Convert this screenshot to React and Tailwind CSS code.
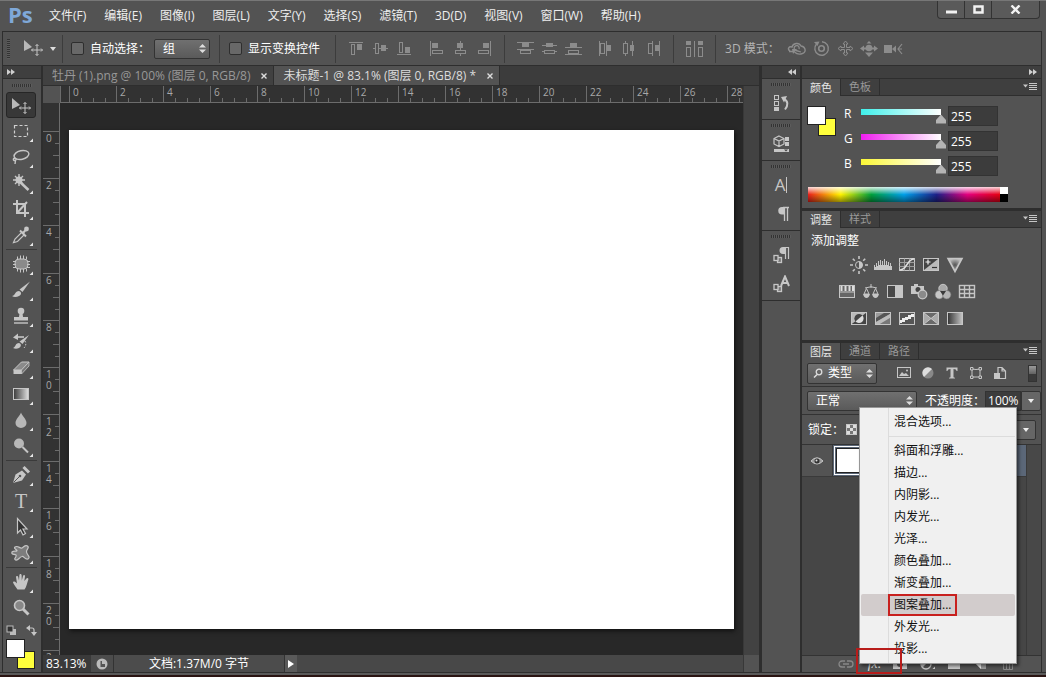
import React from "react";

const MENUS = ["文件(F)", "编辑(E)", "图像(I)", "图层(L)", "文字(Y)", "选择(S)", "滤镜(T)", "3D(D)", "视图(V)", "窗口(W)", "帮助(H)"];
const FX_ITEMS = ["斜面和浮雕...", "描边...", "内阴影...", "内发光...", "光泽...", "颜色叠加...", "渐变叠加...", "图案叠加...", "外发光...", "投影..."];
const H_TICKS = [0, 2, 4, 6, 8, 10, 12, 14, 16, 18, 20, 22, 24, 26, 28];
const V_TICKS = [0, 2, 4, 6, 8, 10, 12, 14, 16, 18, 20, 22];

const C = "#c6c6c6";

function Icon({ w = 16, h = 16, label, children, className = "" }) {
  return (
    <svg width={w} height={h} viewBox={`0 0 ${w} ${h}`} fill="none" aria-label={label} aria-hidden={label ? undefined : true} className={`shrink-0 ${className}`}>
      {children}
    </svg>
  );
}

function MoveGlyph() {
  return (
    <>
      <path d="M0 0 L8 7 L0 11 Z" fill="#b8b8b8" />
      <path d="M13 4.500 V15.500 M7.500 10 H18.500" stroke={C} />
      <path d="M11.500 6 L13 4.500 L14.500 6 M11.500 14 L13 15.500 L14.500 14 M9 8.500 L7.500 10 L9 11.500 M17 8.500 L18.500 10 L17 11.500" stroke={C} />
    </>
  );
}

/* ---------- tool box (each glyph is drawn on a 30 x 26 field) ---------- */
const TOOLS = [
  [
    { n: "移动工具", on: true, g: <g transform="translate(6 6)"><MoveGlyph /></g> },
    { n: "矩形选框工具", g: <rect x="8.500" y="7.500" width="13" height="11" stroke="#d0d0d0" strokeWidth="1.2" strokeDasharray="3 2" /> },
    { n: "套索工具", g: <g stroke={C} strokeWidth="1.400"><ellipse cx="15.500" cy="11" rx="7.500" ry="4.300" transform="rotate(-12 15.500 11)" /><path d="M9.500 14 C6.500 14 7 17 9 16.500 C11 16 10 14 8.500 14.500 M9.500 16.500 L9 20" /></g> },
    { n: "魔棒工具", g: <g stroke={C}><path d="M13 11 L22.500 20" strokeWidth="2.500" /><path d="M13 4 V16 M7 10 H19 M9 6 L17 14 M17 6 L9 14" strokeWidth="1.400" /><circle cx="13" cy="10" r="3.200" fill={C} /></g> },
    { n: "裁剪工具", g: <path d="M11 4 V17 H23 M7 8 H19 V21 M11 17 L21 6" stroke={C} strokeWidth="2" /> },
    { n: "吸管工具", g: <><path d="M7.500 20.500 L9 17 L16 10 L18.500 12.500 L11.500 19.500 Z" stroke={C} strokeWidth="1.200" /><path d="M14 8.500 L20 14.500 M17 11 L20.500 7" stroke={C} strokeWidth="2" /><circle cx="20.500" cy="7" r="2.400" fill={C} /></> },
  ],
  [
    { n: "修补工具", g: <><rect x="9" y="8" width="13" height="10" rx="4" fill="#8a8a8a" stroke={C} /><path d="M7 10.500 H10 M7 13.500 H10 M7 16.500 H10 M21 10.500 H24 M21 13.500 H24 M21 16.500 H24 M11.500 5.500 V8 M14.500 4.500 V8 M17.500 4.500 V8 M20.500 5.500 V8 M11.500 18 V20.500 M14.500 18 V21.500 M17.500 18 V21.500 M20.500 18 V20.500" stroke={C} /></> },
    { n: "画笔工具", g: <><path d="M24 4.500 L16.500 15 L13.500 12.500 Z" fill={C} /><path d="M6 19 C9 19 9 14 13 14 C16 15 15.500 18 13 19 C11 20 8 20.500 6 19 Z" fill={C} /></> },
    { n: "仿制图章工具", g: <><circle cx="15" cy="8" r="3.300" fill={C} /><path d="M13.500 10 H16.500 L17 14 H22 V17.500 H8 V14 H13 Z" fill={C} /><path d="M8 20 H22" stroke={C} strokeWidth="1.400" /></> },
    { n: "历史记录画笔工具", g: <><path d="M23 6 L16.500 15 L13.500 12.500 Z" fill={C} /><path d="M7 19 C10 18 9 14 13 14 C16 15 15 18 13 19 C11 20 9 20 7 19 Z" fill={C} /><path d="M9 8 H18" stroke={C} strokeWidth="1.600" /><path d="M7 8.500 L12 4.500 V11 Z" fill={C} /><path d="M19 12 C21 15 19 19 17 19.500" stroke={C} strokeDasharray="1.500 1.500" /></> },
    { n: "橡皮擦工具", g: <><path d="M7.500 15 L15.500 7 H23 L15.500 15 Z" fill="#8a8a8a" stroke={C} /><path d="M7.500 15 H15.500 V19 H7.500 Z" fill={C} /><path d="M15.500 15 L23 7 V11 L15.500 19 Z" fill="#777" stroke={C} strokeWidth=".8" /></> },
    { n: "渐变工具", g: <><defs><linearGradient id="tg"><stop stopColor="#3a3a3a" /><stop offset="1" stopColor="#e0e0e0" /></linearGradient></defs><rect x="7.500" y="7.500" width="15" height="11" fill="url(#tg)" stroke={C} /></> },
    { n: "模糊工具", g: <path d="M15 5.500 C16 9 20.500 12 20.500 16 A5.500 5 0 0 1 9.500 16 C9.500 12 14 9 15 5.500 Z" fill="#b8b8b8" /> },
    { n: "减淡工具", g: <><circle cx="13" cy="10.500" r="5" fill="#b8b8b8" /><path d="M16.500 14 L22 19.500" stroke={C} strokeWidth="2" /></> },
  ],
  [
    { n: "钢笔工具", g: <><path d="M7 21 L9.500 12.500 L16 8.500 L20 12.500 L16 18.500 Z" fill={C} /><path d="M7.500 20.500 L13.500 14.500" stroke="#535353" /><circle cx="14" cy="14" r="1.300" fill="#535353" /><path d="M17.500 5 L23 10.500" stroke={C} strokeWidth="3" /></> },
    { n: "横排文字工具", t: "T" },
    { n: "路径选择工具", g: <path d="M11.500 4.500 V19 L14.500 16 L17 21 L19.500 19.500 L17 15 H21 Z" fill="#333" stroke={C} strokeWidth="1.200" /> },
    { n: "自定形状工具", g: <path d="M9 7 C12 5 14 9 16 8 C18 7 19 4.500 21.500 6 C24 8 20 9.500 20.500 12 C21 15 25 17 22 19 C19 20 18 16 16 16.500 C13 17 12.500 21 9.500 20 C7 18.500 11.500 16.500 10 15 C8 14 5 14.500 6 12 C8 10 11 12 11 10.500 C10 9 7.500 8.500 9 7 Z" fill="#7d7d7d" stroke={C} strokeWidth="1.200" /> },
  ],
  [
    { n: "抓手工具", g: <path d="M11.500 20.500 C10 18 8 16 7 13.500 C7 12 9 12 10 13.500 L11 14.500 L10 8 C10 6.500 12 6.500 12.200 8 L13 11.500 L13.400 6 C13.500 4.500 15.500 4.500 15.600 6 L15.800 11.500 L17 7 C17.500 5.500 19.200 6 19 7.500 L18.300 12 L20.500 9.500 C21.500 8.500 23 9.500 22.200 11 C21 14 20.500 18 18.500 20.500 Z" fill={C} /> },
    { n: "缩放工具", flat: true, g: <><circle cx="13.500" cy="10.500" r="5" fill="#888" stroke={C} strokeWidth="1.600" /><path d="M17 14 L22.500 19.500" stroke={C} strokeWidth="3" /></> },
  ],
];

function ToolButton({ tool }) {
  return (
    <button type="button" title={tool.n} aria-label={tool.n} className={`relative block h-[26px] w-[30px] rounded-[3px] border ${tool.on ? "border-[#262626] bg-[#383838]" : "border-transparent"}`}>
      <svg viewBox="0 0 30 26" width="30" height="26" fill="none" className="absolute -top-px -left-px" aria-hidden="true">
        {tool.g}
        {!tool.on && !tool.flat && <path d="M27 20.500 V24 H23.500 Z" fill="#e6e6e6" />}
      </svg>
      {tool.t && <span className="block text-center font-['Liberation_Serif',serif] text-[20px] leading-6 text-[#c6c6c6]">{tool.t}</span>}
    </button>
  );
}

function Grip() {
  return <div className="mx-auto h-[3px] w-5 bg-[repeating-linear-gradient(90deg,#333_0_1px,#5c5c5c_1px_2px)]" />;
}

function Swatches({ className = "" }) {
  return (
    <div className={`grid h-[30px] w-[29px] shrink-0 grid-cols-[11px_8px_10px] grid-rows-[12px_7px_11px] ${className}`}>
      <button type="button" aria-label="背景色" className="col-span-2 col-start-2 row-span-2 row-start-2 border border-[#222] bg-[#ffff3c]" />
      <button type="button" aria-label="前景色" className="col-span-2 col-start-1 row-span-2 row-start-1 border border-[#222] bg-white" />
    </div>
  );
}

function Chevrons({ left }) {
  return (
    <Icon w={8} h={6}>
      {left ? <path d="M4 0 V6 L0 3 Z M8 0 V6 L4 3 Z" fill="#cfcfcf" /> : <path d="M0 0 V6 L4 3 Z M4 0 V6 L8 3 Z" fill="#cfcfcf" />}
    </Icon>
  );
}

function Toolbox() {
  return (
    <aside className="flex w-[41px] shrink-0 flex-col border-r-2 border-l border-[#2e2e2e] bg-[#535353]">
      <button type="button" aria-label="展开工具箱" className="flex h-[13px] shrink-0 items-center border-b border-[#2e2e2e] bg-[#3f3f3f] pl-1"><Chevrons /></button>
      <div className="flex h-[13px] shrink-0 items-center"><Grip /></div>
      <div className="flex flex-col pl-[3px]">
        {TOOLS.map((group, i) => (
          <div key={i}>
            {i > 0 && <div className="my-px mr-1 h-px bg-[#3a3a3a]" />}
            {group.map((t) => <ToolButton key={t.n} tool={t} />)}
          </div>
        ))}
      </div>
      <div className="flex h-[18px] shrink-0 items-center justify-between pr-1 pl-[3px]">
        <button type="button" aria-label="默认前景色和背景色">
          <Icon w={11} h={11}><rect x="4" y="4" width="6" height="6" fill="#bbb" /><rect x="1" y="1" width="6" height="6" fill="#333" stroke="#bbb" /></Icon>
        </button>
        <button type="button" aria-label="切换前景色和背景色">
          <Icon w={11} h={11}><path d="M3 3 H6 Q8 3 8 5 V8" stroke={C} strokeWidth="1.200" /><path d="M0 3 L4 0 V6 Z M5 7 H11 L8 11 Z" fill={C} /></Icon>
        </button>
      </div>
      <Swatches className="ml-[3px]" />
    </aside>
  );
}

/* ---------- menu bar and options bar ---------- */
function MenuBar() {
  return (
    <header className="flex h-[31px] shrink-0 items-center border-t border-[#777] bg-[#535353] pr-[6px]">
      <span className="mb-1 w-[49px] pl-2 text-[22px] leading-6 font-bold text-[#7fa8d8]">Ps</span>
      <nav className="flex flex-1 gap-[18px]">
        {MENUS.map((m) => <button type="button" key={m} className="whitespace-nowrap text-[#eee]">{m}</button>)}
      </nav>
      <div className="flex h-[18px] self-start overflow-hidden rounded-b-[4px] border border-t-0 border-[#333] bg-[#5a5a5a]">
        <button type="button" aria-label="最小化" className="flex w-[27px] items-center justify-center border-r border-[#333]"><Icon w={11} h={8}><path d="M0 6 H11" stroke="#f2f2f2" strokeWidth="3" /></Icon></button>
        <button type="button" aria-label="最大化" className="flex w-[27px] items-center justify-center border-r border-[#333]"><Icon w={11} h={9}><rect x="1.500" y="1.500" width="8" height="6" stroke="#f2f2f2" strokeWidth="2.500" /></Icon></button>
        <button type="button" aria-label="关闭" className="flex w-[47px] items-center justify-center"><Icon w={11} h={9}><path d="M1.500 0.500 L9.500 8.500 M9.500 0.500 L1.500 8.500" stroke="#f2f2f2" strokeWidth="2.400" /></Icon></button>
      </div>
    </header>
  );
}

const G = "#8c8c8c";
const barsV = (edge) => (
  <Icon w={15} h={15}>
    {edge === "t" && <path d="M0 1.500 H14" stroke={G} />}
    {edge === "m" && <path d="M0 7.500 H15" stroke={G} />}
    {edge === "b" && <path d="M0 13.500 H14" stroke={G} />}
    <rect x="2.500" y={edge === "t" ? 3.5 : edge === "m" ? 2.5 : 1.5} width="3" height="10" fill="#535353" stroke={G} />
    <rect x="8" y={edge === "t" ? 3 : edge === "m" ? 4 : 6} width="5" height="6" fill={G} />
  </Icon>
);
const barsH = (edge) => (
  <Icon w={15} h={15}>
    {edge === "l" && <path d="M1.500 0 V15" stroke={G} />}
    {edge === "c" && <path d="M7.500 0 V15" stroke={G} />}
    {edge === "r" && <path d="M13.500 0 V15" stroke={G} />}
    <rect x={edge === "l" ? 3 : edge === "c" ? 4 : 6} y="2" width="6" height="5" fill={G} />
    <rect x={edge === "l" ? 3.5 : edge === "c" ? 2.5 : 1.5} y="9.500" width="10" height="3" fill="#535353" stroke={G} />
  </Icon>
);
const distV = (k) => (
  <Icon w={17} h={15}>
    <path d={k === 0 ? "M0 1.500 H17 M0 8.500 H17" : k === 1 ? "M1 4.500 H16 M1 10.500 H16" : "M0 6.500 H17 M0 13.500 H17"} stroke={G} />
    <rect x="5" y="2" width="7" height="4" fill={G} />
    <rect x="3.500" y="9.500" width="10" height="3" fill="#535353" stroke={G} />
  </Icon>
);
const distH = (k) => (
  <Icon w={15} h={17}>
    <path d={k === 0 ? "M1.500 1 V16 M8.500 1 V16" : k === 1 ? "M3.500 1 V16 M10.500 1 V16" : "M6.500 1 V16 M13.500 1 V16"} stroke={G} />
    <rect x={[2.5, 1.5, 2.5][k]} y="3.500" width="4" height="10" fill="#535353" stroke={G} />
    <rect x={[9, 8, 9][k]} y="5" width="4" height="6" fill={G} />
  </Icon>
);

function Sep() {
  return <div className="h-7 w-px shrink-0 bg-[#3c3c3c]" />;
}

function IconRow({ items, labels, className = "" }) {
  return (
    <div className={`flex ${className}`}>
      {items.map((it, i) => <button type="button" key={i} aria-label={labels[i]} className="flex w-6 items-center justify-center">{it}</button>)}
    </div>
  );
}

function UpDown() {
  return <Icon w={7} h={9} className="pointer-events-none col-start-1 row-start-1 mr-1 justify-self-end self-center"><path d="M0 3.500 L3.500 0 L7 3.500 Z M0 5.500 L3.500 9 L7 5.500 Z" fill="#ddd" /></Icon>;
}

function Select({ id, label, value, className = "", pad = "pl-2" }) {
  return (
    <div className={`grid shrink-0 ${className}`}>
      <select id={id} aria-label={label} defaultValue={value} className={`col-start-1 row-start-1 h-full w-full appearance-none rounded-[2px] border border-[#333] bg-linear-to-b from-[#707070] to-[#5a5a5a] text-white ${pad}`}>
        <option>{value}</option>
      </select>
      <UpDown />
    </div>
  );
}

function Tick({ id, children }) {
  return (
    <>
      <input id={id} type="checkbox" className="h-[13px] w-[13px] shrink-0 appearance-none rounded-[2px] border border-[#2e2e2e] bg-[#686868]" />
      <label htmlFor={id} className="ml-[6px] whitespace-nowrap text-white">{children}</label>
    </>
  );
}

function OptionsBar() {
  return (
    <div className="mr-1 ml-0.5 flex h-[35px] shrink-0 items-center border border-[#2e2e2e] bg-[#535353]">
      <div className="ml-1 h-5 w-[3px] bg-[repeating-linear-gradient(180deg,#333_0_1px,#5c5c5c_1px_2px)]" />
      <button type="button" aria-label="移动工具预设" className="mr-[6px] ml-[14px] flex items-center gap-[6px]">
        <Icon w={20} h={17}><MoveGlyph /></Icon>
        <Icon w={6} h={4}><path d="M0 0 H6 L3 4 Z" fill="#ddd" /></Icon>
      </button>
      <Sep />
      <div className="ml-2 flex items-center"><Tick id="auto">自动选择：</Tick></div>
      <Select id="scope" label="自动选择" value="组" className="mr-[9px] ml-1 h-5 w-14" />
      <Sep />
      <div className="ml-[9px] flex w-[106px] items-center"><Tick id="xform">显示变换控件</Tick></div>
      <Sep />
      <IconRow className="ml-2" items={[barsV("t"), barsV("m"), barsV("b")]} labels={["顶对齐", "垂直居中对齐", "底对齐"]} />
      <IconRow className="mr-2 ml-2" items={[barsH("l"), barsH("c"), barsH("r")]} labels={["左对齐", "水平居中对齐", "右对齐"]} />
      <Sep />
      <IconRow className="ml-2" items={[distV(0), distV(1), distV(2)]} labels={["按顶分布", "垂直居中分布", "按底分布"]} />
      <IconRow className="mr-2 ml-2" items={[distH(0), distH(1), distH(2)]} labels={["按左分布", "水平居中分布", "按右分布"]} />
      <Sep />
      <button type="button" aria-label="自动对齐图层" className="mx-3">
        <Icon w={17} h={16}><rect x="0" y="0" width="5" height="4" fill={G} /><rect x=".5" y="6.500" width="4" height="9" stroke={G} /><path d="M8.500 0 V16" stroke={G} /><rect x="12" y="0" width="5" height="4" fill={G} /><rect x="12.500" y="6.500" width="4" height="9" stroke={G} /></Icon>
      </button>
      <Sep />
      <span className="mr-2 ml-[9px] w-[52px] whitespace-nowrap text-[#b4b4b4]">3D 模式：</span>
      <IconRow
        labels={["旋转", "滚动", "拖动", "滑动", "缩放"]}
        items={[
          <Icon w={20} h={16}><path d="M3 10 C0 8 2 5 5 6 C6 2 12 1 14 5 C19 6 20 12 14 13 C11 13.500 9 12.500 7.500 11" stroke={G} strokeWidth="1.400" /><path d="M2 10.500 H7 M12 8 A2.500 2.500 0 1 0 9 9.500 L14 11" stroke={G} strokeWidth="1.300" /><path d="M5 8 H10 L6 13 Z" fill={G} /></Icon>,
          <Icon w={17} h={17}><circle cx="8.500" cy="8.500" r="2.800" stroke={G} strokeWidth="1.600" /><path d="M3.500 4 A6.800 6.800 0 1 0 9 1.700" stroke={G} strokeWidth="1.400" /><path d="M1 2 L6.500 1.500 L4.500 6 Z" fill={G} /></Icon>,
          <Icon w={17} h={17}><path d="M8.500 1 L11 4 H9.500 V7.500 H13 V6 L16 8.500 L13 11 V9.500 H9.500 V13 H11 L8.500 16 L6 13 H7.500 V9.500 H4 V11 L1 8.500 L4 6 V7.500 H7.500 V4 H6 Z" stroke={G} /></Icon>,
          <Icon w={18} h={17}><circle cx="9" cy="8" r="3.300" fill={G} /><path d="M9 1 L11.500 3.500 H6.500 Z M9 17 L13 12.500 H5 Z M0 8.500 L4 5.500 V7.500 H14 V5.500 L18 8.500 L14 11.500 V9.500 H4 V11.500 Z" fill={G} /></Icon>,
          <Icon w={19} h={12}><rect x="0" y="2" width="8" height="8" fill={G} /><path d="M8 6 L12 2.500 V9.500 Z" fill={G} /><path d="M18 1 L14 6 L18 11 M14 6 H18" stroke={G} strokeWidth="1.200" /></Icon>,
        ]}
      />
    </div>
  );
}

/* ---------- document ---------- */
function Rulers({ children }) {
  return (
    <div className="grid min-h-0 flex-1 grid-cols-[17px_minmax(0,1fr)] grid-rows-[17px_minmax(0,1fr)] bg-[#323232] text-[10px] leading-[11px] text-[#a8a8a8]">
      <div className="bg-[#535353]" />
      <div className="overflow-hidden border-b border-l border-[#6c6c6c] pl-2">
        <div className="flex w-[705px]">
          {H_TICKS.map((n) => (
            <div key={n} className="relative h-4 flex-1 border-l border-[#6c6c6c] pt-px pl-[3px]">
              {n}
              <div className="absolute bottom-0 left-[11px] flex items-end gap-[11px]">
                <i className="h-1 w-px bg-[#6c6c6c]" /><i className="h-1 w-px bg-[#6c6c6c]" /><i className="h-1 w-px bg-[#6c6c6c]" />
              </div>
            </div>
          ))}
        </div>
      </div>
      <div className="overflow-hidden border-r border-[#6c6c6c] pt-7">
        <div className="flex h-[566px] flex-col">
          {V_TICKS.map((n) => (
            <div key={n} className="relative flex flex-1 flex-col border-t border-[#6c6c6c] pt-px pl-[3px]">
              {String(n).split("").map((d, i) => <span key={i}>{d}</span>)}
              <div className="absolute top-[11px] right-0 flex flex-col items-end gap-[11px]">
                <i className="h-px w-1 bg-[#6c6c6c]" /><i className="h-px w-1.5 bg-[#6c6c6c]" /><i className="h-px w-1 bg-[#6c6c6c]" />
              </div>
            </div>
          ))}
        </div>
      </div>
      {children}
    </div>
  );
}

function DocTab({ active, children }) {
  return (
    <div className={`flex h-full items-center gap-[11px] border-r border-[#2e2e2e] pr-[6px] pl-[9px] whitespace-nowrap ${active ? "bg-[#535353] text-[#dcdcdc]" : "bg-[#414141] text-[#989898]"}`}>
      <button type="button">{children}</button>
      <button type="button" aria-label="关闭文档"><Icon w={6} h={6}><path d="M0.500 0.500 L5.500 5.500 M5.500 0.500 L0.500 5.500" stroke="#ddd" strokeWidth="1.400" /></Icon></button>
    </div>
  );
}

function DocumentArea() {
  return (
    <main className="flex min-w-0 flex-1 flex-col bg-[#3c3c3c]">
      <div className="flex h-5 shrink-0 border-b border-[#2e2e2e]">
        <DocTab>牡丹 (1).png @ 100% (图层 0, RGB/8)</DocTab>
        <DocTab active>未标题-1 @ 83.1% (图层 0, RGB/8) *</DocTab>
      </div>
      <div className="flex min-h-0 flex-1">
        <div className="flex min-w-0 flex-1 flex-col">
          <Rulers>
            <div className="flex min-h-0 bg-[#282828] px-[9px] pt-[27px] pb-[26px]">
              <div className="flex-1 bg-white shadow-[1px_2px_4px_#111]" role="img" aria-label="画布" />
            </div>
          </Rulers>
          <div className="flex h-[17px] shrink-0 items-center bg-[#484848] leading-4 text-white">
            <input aria-label="缩放比例" defaultValue="83.13%" className="h-full w-12 bg-[#3a3a3a] pl-[3px]" />
            <div className="flex h-full w-[23px] items-center justify-center border-r border-[#333] bg-[#4c4c4c]">
              <Icon w={12} h={12}><circle cx="6" cy="6" r="5.500" fill="#bbb" /><path d="M4.500 3 V9 H9 V6 H6 V3 Z" fill="#555" /></Icon>
            </div>
            <div className="flex h-full w-[171px] items-center justify-center border-r border-[#333] bg-[#4c4c4c]">文档:1.37M/0 字节</div>
            <button type="button" aria-label="状态信息" className="flex h-full w-3 items-center justify-center bg-[#5a5a5a]"><Icon w={6} h={8}><path d="M0 0 L6 4 L0 8 Z" fill="#fff" /></Icon></button>
          </div>
        </div>
        <div className="flex w-4 shrink-0 flex-col justify-end border-l border-[#383838] bg-[#424242]">
          <div className="h-[17px] bg-[#535353]" />
        </div>
      </div>
    </main>
  );
}

/* ---------- collapsed dock ---------- */
const DOCK = [
  [{ n: "历史记录", g: <><rect x="1.500" y="1.500" width="4" height="4" stroke={C} /><rect x="1.500" y="7.500" width="4" height="4" stroke={C} /><rect x="1" y="13" width="5" height="4" fill={C} /><path d="M11 5 C15 7 15.500 11 12 15.500" stroke={C} strokeWidth="2" /><path d="M8 3 L14 2 L11 8.500 Z" fill={C} /></> }],
  [{ n: "属性", g: <><path d="M6 1 L11 3.500 V9 L6 11.500 L1 9 V3.500 Z M1 3.500 L6 6 L11 3.500 M6 6 V11.500" stroke={C} strokeWidth="1.200" /><rect x="12" y="2" width="4" height="4" fill={C} /><rect x="12" y="7" width="4" height="4" fill={C} /><rect x="1" y="14" width="15" height="3" fill={C} /><path d="M11 14.500 H15 L13 16.500 Z" fill="#444" /></> }],
  [
    { n: "字符", t: <span className="border-r border-[#c6c6c6] pr-px text-[17px] leading-4">A</span> },
    { n: "段落", g: <><path d="M11.500 2.500 V16 M14.500 2.500 V16 M10 2.500 H16" stroke={C} strokeWidth="1.300" /><path d="M12 2 H9 A3.500 3.500 0 0 0 9 9.500 H12 Z" fill={C} /></> },
  ],
  [
    { n: "段落样式", g: <><path d="M12.500 1 V13 M15.500 1 V13" stroke={C} strokeWidth="1.200" /><path d="M16 1 H10 A3 3 0 0 0 10 8 H12 V2 H16 Z" fill={C} /><rect x="4.500" y="11.500" width="4" height="5" fill="#777" stroke={C} strokeWidth="1.300" /><rect x="1" y="9.500" width="4" height="5" fill="#535353" stroke={C} strokeWidth="1.300" /></> },
    { n: "字符样式", g: <><path d="M8 11 L12 1.500 L16 11 M9.500 8 H14.500" stroke={C} strokeWidth="2" /><rect x="4.500" y="11.500" width="4" height="5" fill="#777" stroke={C} strokeWidth="1.300" /><rect x="1" y="9.500" width="4" height="5" fill="#535353" stroke={C} strokeWidth="1.300" /></> },
  ],
];

function Dock() {
  return (
    <aside className="flex w-[43px] shrink-0 flex-col border-r-2 border-l-3 border-[#2e2e2e] bg-[#535353]">
      <button type="button" aria-label="展开面板" className="flex h-[13px] shrink-0 items-center justify-end border-b border-[#2e2e2e] bg-[#3f3f3f] pr-1"><Chevrons left /></button>
      {DOCK.map((g, i) => (
        <div key={i} className="border-b border-[#2e2e2e]">
          <div className="flex h-[11px] items-center"><Grip /></div>
          {g.map((b) => (
            <button type="button" key={b.n} aria-label={b.n} className="flex h-[29px] w-full items-center justify-center pb-1 text-[#c6c6c6]">
              {b.t || <Icon w={17} h={18}>{b.g}</Icon>}
            </button>
          ))}
        </div>
      ))}
    </aside>
  );
}

/* ---------- panels ---------- */
function PanelTabs({ tabs }) {
  return (
    <div className="flex h-[17px] shrink-0 items-stretch bg-[#3f3f3f] text-[11px] leading-4">
      {tabs.map((t, i) => (
        <button type="button" key={t} className={`border-r border-[#2e2e2e] px-2 ${i === 0 ? "bg-[#535353] text-[#e6e6e6]" : "border-b text-[#999]"}`}>{t}</button>
      ))}
      <div className="flex flex-1 items-center justify-end border-b border-[#2e2e2e] pr-1">
        <button type="button" aria-label="面板菜单"><Icon w={14} h={8}><path d="M0 1.500 H5 L2.500 4.500 Z" fill={C} /><path d="M6 .5 H14 M6 2.500 H14 M6 4.500 H14 M6 6.500 H14" stroke={C} strokeWidth="1" /></Icon></button>
      </div>
    </div>
  );
}

const CHANNELS = [
  ["R", "bg-[linear-gradient(90deg,#3ff0ea,#fff)]"],
  ["G", "bg-[linear-gradient(90deg,#f01cf0,#fff)]"],
  ["B", "bg-[linear-gradient(90deg,#fbf736,#fff)]"],
];

function ColorPanel() {
  return (
    <section className="flex h-[132px] shrink-0 flex-col border-b-3 border-[#2e2e2e]">
      <PanelTabs tabs={["颜色", "色板"]} />
      <div className="flex pt-2.5 pl-[5px]">
        <Swatches />
        <div className="ml-2 flex flex-col gap-[5px]">
          {CHANNELS.map(([k, bg]) => (
            <div key={k} className="flex h-5 items-center">
              <label htmlFor={`ch-${k}`} className="w-3 self-start leading-4 text-white">{k}</label>
              <input
                id={`ch-${k}`}
                type="range"
                min="0"
                max="255"
                defaultValue="255"
                className={`${bg} h-4 w-[90px] appearance-none bg-[length:80px_6px] bg-[position:5px_1px] bg-no-repeat [&::-webkit-slider-thumb]:mt-[6px] [&::-webkit-slider-thumb]:h-[9px] [&::-webkit-slider-thumb]:w-[10px] [&::-webkit-slider-thumb]:appearance-none [&::-webkit-slider-thumb]:bg-[#b4b4b4] [&::-webkit-slider-thumb]:[clip-path:polygon(50%_0,100%_60%,100%_100%,0_100%,0_60%)]`}
              />
              <input aria-label={`${k} 值`} defaultValue="255" className="ml-0.5 h-5 w-[50px] border border-[#333] bg-[#3c3c3c] pl-0.5 text-white" />
            </div>
          ))}
        </div>
      </div>
      <div role="img" aria-label="色谱" className="mt-[11px] ml-1.5 flex h-[15px] w-[200px]">
        <div className="h-full flex-1 bg-[linear-gradient(180deg,rgba(255,255,255,.85),rgba(255,255,255,0)_50%,rgba(0,0,0,.45)),linear-gradient(90deg,#e8201c,#fff200_17%,#00a03c_33%,#00a0e9_50%,#1d2088_67%,#e4007f_83%,#e60012)]" />
        <div className="h-full w-2 bg-[linear-gradient(180deg,#fff_50%,#000_50%)]" />
      </div>
    </section>
  );
}

const frame = <rect x=".5" y="1.500" width="15" height="12" fill="#6a6a6a" stroke={C} />;
const ADJUST = [
  [
    ["亮度/对比度", <><circle cx="8" cy="8" r="3.500" stroke={C} /><path d="M8 4.500 A3.500 3.500 0 0 1 8 11.500 Z" fill={C} /><path d="M8 -1 V2 M8 14 V17 M-1 8 H2 M14 8 H17 M1.800 1.800 L3.800 3.800 M12.200 12.200 L14.200 14.200 M1.800 14.200 L3.800 12.200 M12.200 3.800 L14.200 1.800" stroke={C} strokeWidth="1.600" /></>],
    ["色阶", <path d="M-1 13 V8 H0 V10 H1 V6 H2 V9 H3 V4 H4 V8 H5 V3 H6 V8 H7 V4 H8 V8 H9 V2 H10 V8 H11 V4 H12 V8 H13 V5 H14 V9 H15 V6 H16 V9 H17 V13 Z" fill={C} />],
    ["曲线", <><rect x=".5" y="1.500" width="15" height="12" stroke={C} /><path d="M5.500 1.500 V13.500 M10.500 1.500 V13.500 M.5 5.500 H15.500 M.5 9.500 H15.500" stroke="#9c9c9c" /><path d="M1 13 C8 13 8 2 15 2" stroke="#e0e0e0" strokeWidth="1.400" /></>],
    ["曝光度", <><rect x=".5" y="1.500" width="15" height="12" fill="#444" stroke={C} /><path d="M1 13 L15 2 V13 Z" fill="#bbb" /><path d="M2.500 5 H7.500 M5 2.500 V7.500" stroke="#eee" strokeWidth="1.200" /><path d="M9 10.500 H14" stroke="#333" strokeWidth="1.200" /></>],
    ["自然饱和度", <><defs><radialGradient id="vib"><stop stopColor="#555" /><stop offset="1" stopColor="#bbb" /></radialGradient></defs><path d="M1 1.500 H15 L8 14.500 Z" fill="url(#vib)" stroke={C} strokeWidth="1.600" /></>],
  ],
  [
    ["色相/饱和度", <><rect x=".5" y="1.500" width="15" height="12" fill="#666" stroke={C} /><path d="M2.500 2 V7 M6.500 2 V7 M10.500 2 V7 M14 2 V7" stroke="#ddd" strokeWidth="2" /><path d="M1 8 H15" stroke={C} /></>],
    ["色彩平衡", <><path d="M8 0 V4 M2 4 Q8 1.500 14 4 M3.500 4.500 L1 10 H6 Z M12.500 4.500 L10 10 H15 Z" stroke={C} /><path d="M0 10 H7 Q6 14 3.500 14 Q1 14 0 10 Z M9 10 H16 Q15 14 12.500 14 Q10 14 9 10 Z" fill={C} /></>],
    ["黑白", <><rect x=".5" y="1.500" width="15" height="12" fill="#484848" stroke={C} /><rect x="8" y="2" width="7" height="11" fill={C} /></>],
    ["照片滤镜", <><path d="M0 2 H3 V0 H7 V2 H13 V10 H0 Z" fill={C} /><circle cx="7" cy="5.500" r="2.500" fill="#444" /><circle cx="11.500" cy="10.500" r="4.300" fill="#8a8a8a" stroke={C} strokeWidth="1.300" /></>],
    ["通道混合器", <><circle cx="8" cy="4.500" r="4.200" fill="#a8a8a8" stroke={C} /><circle cx="4.300" cy="10.700" r="4.200" fill={C} stroke="#777" strokeWidth=".6" /><circle cx="11.700" cy="10.700" r="4.200" fill="#b4b4b4" stroke="#777" strokeWidth=".6" /><path d="M5 7 H11 L8 11.500 Z" fill="#3a3a3a" /></>],
    ["颜色查找", <><rect x=".5" y="1.500" width="15" height="12" stroke={C} strokeWidth="1.400" /><path d="M5.500 1.500 V13.500 M10.500 1.500 V13.500 M.5 5.500 H15.500 M.5 9.500 H15.500" stroke={C} strokeWidth="1.400" /></>],
  ],
  [
    ["反相", <>{frame}<path d="M1 2 H15 L1 13 Z" fill="#bbb" /><path d="M15 2 V13 H1 Z" fill="#444" /><path d="M4.500 10.500 A4.300 4.300 0 0 1 11.500 4.500 Z" fill="#444" /><path d="M4.500 10.500 A4.300 4.300 0 0 0 11.500 4.500 Z" fill="#ddd" /></>],
    ["色调分离", <><rect x=".5" y="1.500" width="15" height="12" fill="#9a9a9a" stroke={C} /><path d="M1 7 L9 2 H15 V3 L1 11 Z" fill="#555" /><path d="M1 11 L15 3 V7 L5 13 H1 Z" fill="#bbb" /><path d="M5 13 L15 7 V13 Z" fill="#777" /></>],
    ["阈值", <><rect x=".5" y="1.500" width="15" height="12" fill="#555" stroke={C} /><path d="M1 9 H3 V7 H6 V6 H9 V4 H12 V3 H15 V6 H12 V8 H9 V9 H6 V11 H3 V12 H1 Z" fill="#eee" /></>],
    ["可选颜色", <>{frame}<path d="M1 2 L8 7.500 L1 13 Z M15 2 L8 7.500 L15 13 Z" fill="#aaa" /><path d="M.5 1.500 L15.500 13.500 M15.500 1.500 L.5 13.500" stroke={C} /></>],
    ["渐变映射", <><defs><linearGradient id="gm"><stop stopColor="#333" /><stop offset="1" stopColor="#c6c6c6" /></linearGradient></defs><rect x=".5" y="1.500" width="15" height="12" fill="url(#gm)" stroke={C} /></>],
  ],
];

function AdjustPanel() {
  return (
    <section className="flex h-[132px] shrink-0 flex-col border-b-3 border-[#2e2e2e]">
      <PanelTabs tabs={["调整", "样式"]} />
      <h2 className="mt-1 pl-[9px] leading-[18px] text-white">添加调整</h2>
      <div className="mt-px flex flex-col pr-[30px]">
        {ADJUST.map((row, i) => (
          <div key={i} className="flex h-[27px] items-center justify-center">
            {row.map(([n, g]) => <button type="button" key={n} aria-label={n} title={n} className="flex w-6 justify-center"><Icon className="overflow-visible">{g}</Icon></button>)}
          </div>
        ))}
      </div>
    </section>
  );
}

function DropButton({ label }) {
  return (
    <button type="button" aria-label={label} className="flex h-5 w-5 shrink-0 items-center justify-center rounded-r-[2px] border border-[#333] bg-[#666]">
      <Icon w={6} h={4}><path d="M0 0 H6 L3 4 Z" fill="#eee" /></Icon>
    </button>
  );
}

function FxMenu() {
  return (
    <div role="menu" className="absolute right-6 bottom-2 z-10 flex w-[158px] flex-col border border-[#979797] bg-[linear-gradient(90deg,#f0f0f0_28px,#dcdcdc_28px_29px,#f0f0f0_29px)] px-px pt-[3px] pb-[3px] text-[#111] shadow-[2px_2px_3px_rgba(0,0,0,.5)]">
      <button type="button" role="menuitem" className="h-[22px] pl-[33px] text-left">混合选项...</button>
      <div className="my-[3px] ml-7 h-px bg-[#dcdcdc]" />
      {FX_ITEMS.map((t) =>
        t === "图案叠加..." ? (
          <button type="button" role="menuitem" key={t} className="flex h-[22px] items-center rounded-[2px] bg-[#d2cccc] pl-[27px]">
            <span className="border-2 border-[#c8201e] px-1 leading-[18px]">{t}</span>
          </button>
        ) : (
          <button type="button" role="menuitem" key={t} className="h-[22px] pl-[33px] text-left">{t}</button>
        )
      )}
    </div>
  );
}

const FILTERS = [
  ["像素图层", <><rect x="1.500" y="2.500" width="13" height="10" stroke={C} /><path d="M3 11 L6 7 L8 9 L10 8 L13 11 Z" fill={C} /><circle cx="11" cy="5.500" r="1" fill={C} /></>],
  ["调整图层", <><circle cx="8" cy="8" r="5.500" fill="#888" /><path d="M4 12 A5.500 5.500 0 0 1 12 4 Z" fill="#ddd" /></>],
  ["文字图层", <path d="M2.500 2.500 H13.500 V6 H12.500 Q12.500 4 9.500 4 V12 Q9.500 12.800 11 12.800 V13.500 H5 V12.800 Q6.500 12.800 6.500 12 V4 Q3.500 4 3.500 6 H2.500 Z" fill={C} />],
  ["形状图层", <><path d="M4 4 Q8 5 12 4 V12 H4 Z" stroke={C} /><path d="M2.500 2.500 H5 V5 H2.500 Z M11 2.500 H13.500 V5 H11 Z M2.500 11 H5 V13.500 H2.500 Z M11 11 H13.500 V13.500 H11 Z" fill="#535353" stroke={C} /></>],
  ["智能对象", <><path d="M6 2.500 H10 L13.500 6 V13.500 H6 Z M10 2.500 V6 H13.500" stroke={C} strokeWidth="1.200" /><rect x="2" y="8" width="6" height="6" fill={C} /></>],
];

const FOOT = [
  ["链接图层", <path d="M7 5 H4 A3 3 0 0 0 4 11 H7 M9 5 H12 A3 3 0 0 1 12 11 H9 M5 8 H11" stroke="#888" strokeWidth="1.300" />],
  ["图层样式", null],
  ["添加蒙版", <><rect x="1" y="3" width="14" height="10" fill={C} /><circle cx="8" cy="8" r="3" fill="#535353" /></>],
  ["调整图层", <><circle cx="7" cy="8" r="5" stroke={C} strokeWidth="1.400" /><path d="M3.500 11.500 A5 5 0 0 1 10.500 4.500 Z" fill={C} /><path d="M16 10.500 V13 H13.500 Z" fill={C} /></>],
  ["新建组", <path d="M2 3 H7 L8 5 H14 V13 H2 Z" fill={C} />],
  ["新建图层", <><path d="M3 3 H13 V13 H8 L3 8 Z" fill="#999" /><path d="M3 8 H8 V13 Z" fill="#eee" /></>],
  ["删除图层", <><path d="M3.500 5.500 H12.500 V13.500 H3.500 Z M6.500 6 V13 M9.500 6 V13 M2 4 H14 M6 2.500 H10" stroke="#888" /></>],
];

function LayersPanel() {
  return (
    <section className="relative flex min-h-0 flex-1 flex-col">
      <PanelTabs tabs={["图层", "通道", "路径"]} />
      <div className="flex h-[27px] shrink-0 items-center border-b border-[#333] pr-1 pl-[5px]">
        <div className="grid shrink-0">
          <Select id="kind" label="图层过滤" value="类型" pad="pl-5" className="col-start-1 row-start-1 h-[21px] w-[70px]" />
          <Icon w={10} h={10} className="pointer-events-none col-start-1 row-start-1 ml-1.5 self-center"><circle cx="6" cy="4" r="2.800" stroke="#ddd" strokeWidth="1.300" /><path d="M4 6.500 L1 9.500" stroke="#ddd" strokeWidth="1.500" /></Icon>
        </div>
        <div className="ml-[15px] flex flex-1">
          {FILTERS.map(([n, g]) => <button type="button" key={n} aria-label={n} className="flex w-6 justify-center"><Icon>{g}</Icon></button>)}
        </div>
        <button type="button" aria-label="打开或关闭图层过滤" className="h-[17px] w-[9px] border border-[#333] bg-[linear-gradient(180deg,#999,#666_50%,#3a3a3a_50%)]" />
      </div>
      <div className="flex h-[28px] shrink-0 items-center border-b border-[#333] pr-[5px] pl-[5px]">
        <Select id="blend" label="混合模式" value="正常" className="h-5 w-[110px]" />
        <label htmlFor="opacity" className="ml-2 flex-1 whitespace-nowrap text-white">不透明度：</label>
        <input id="opacity" defaultValue="100%" className="h-5 w-9 shrink-0 border border-[#333] bg-[#3c3c3c] pl-[2px] text-white" />
        <DropButton label="不透明度滑块" />
      </div>
      <div className="flex h-[30px] shrink-0 items-center border-b border-[#333] pr-[5px] pl-[6px] text-white">
        <span className="w-9">锁定：</span>
        <button type="button" aria-label="锁定透明像素" className="ml-[2px] flex-1">
          <Icon w={11} h={11}><rect x=".5" y=".5" width="10" height="10" fill="#777" stroke={C} /><path d="M1 1 H4 V4 H1 Z M7 1 H10 V4 H7 Z M4 4 H7 V7 H4 Z M1 7 H4 V10 H1 Z M7 7 H10 V10 H7 Z" fill="#ddd" /></Icon>
        </button>
        <DropButton label="填充滑块" />
      </div>
      <div className="flex min-h-0 flex-1 bg-[#464646]">
        <div className="flex-1">
          <div className="flex h-8 border-b border-[#3a3a3a]">
            <button type="button" aria-label="指示图层可见性" className="flex w-[31px] items-center justify-center border-r border-[#3a3a3a] bg-[#535353]">
              <Icon w={14} h={10}><path d="M1 5 Q7 -1.500 13 5 Q7 11 1 5 Z" fill="#999" stroke={C} /><circle cx="7" cy="5" r="2.500" fill="#333" /><circle cx="6.500" cy="4.500" r="1" fill="#ddd" /></Icon>
            </button>
            <div className="flex flex-1 items-center bg-[#5b6778] pl-px">
              <div className="border border-white p-px"><div className="h-[25px] w-8 border border-[#222] bg-white" /></div>
            </div>
          </div>
        </div>
        <div className="w-[15px] border-l border-[#3a3a3a] bg-[#484848]" />
      </div>
      <div className="flex h-[17px] shrink-0 items-center border-t border-[#333] pl-[30px]">
        {FOOT.map(([n, g]) => (
          <button type="button" key={n} aria-label={n} className="flex w-[27px] justify-center">
            {g ? <Icon>{g}</Icon> : <span className="pl-1 font-['Liberation_Serif',serif] text-[14px] leading-4 text-[#ddd] italic">fx.</span>}
          </button>
        ))}
      </div>
      <FxMenu />
      <div className="pointer-events-none absolute right-[139px] -bottom-0.5 z-20 h-[26px] w-[46px] border-2 border-[#b81c1a]" />
    </section>
  );
}

export default function App() {
  return (
    <div className="flex h-screen min-h-[640px] flex-col overflow-hidden bg-[#535353] font-['Open_Sans','Noto_Sans_CJK_SC',sans-serif] text-[12px] leading-4 select-none">
      <MenuBar />
      <OptionsBar />
      <div className="mr-1 ml-0.5 flex min-h-0 flex-1">
        <Toolbox />
        <DocumentArea />
        <Dock />
        <aside className="flex w-[240px] shrink-0 flex-col border-r border-[#2e2e2e] bg-[#535353]">
          <button type="button" aria-label="折叠面板" className="flex h-[13px] shrink-0 items-center justify-end border-b border-[#2e2e2e] bg-[#3f3f3f] pr-1"><Chevrons /></button>
          <ColorPanel />
          <AdjustPanel />
          <LayersPanel />
        </aside>
      </div>
      <div className="h-[5px] shrink-0 border-t border-b-2 border-t-[#2e2e2e] border-b-[#2a1412] bg-[#5a5a5a]" />
    </div>
  );
}
